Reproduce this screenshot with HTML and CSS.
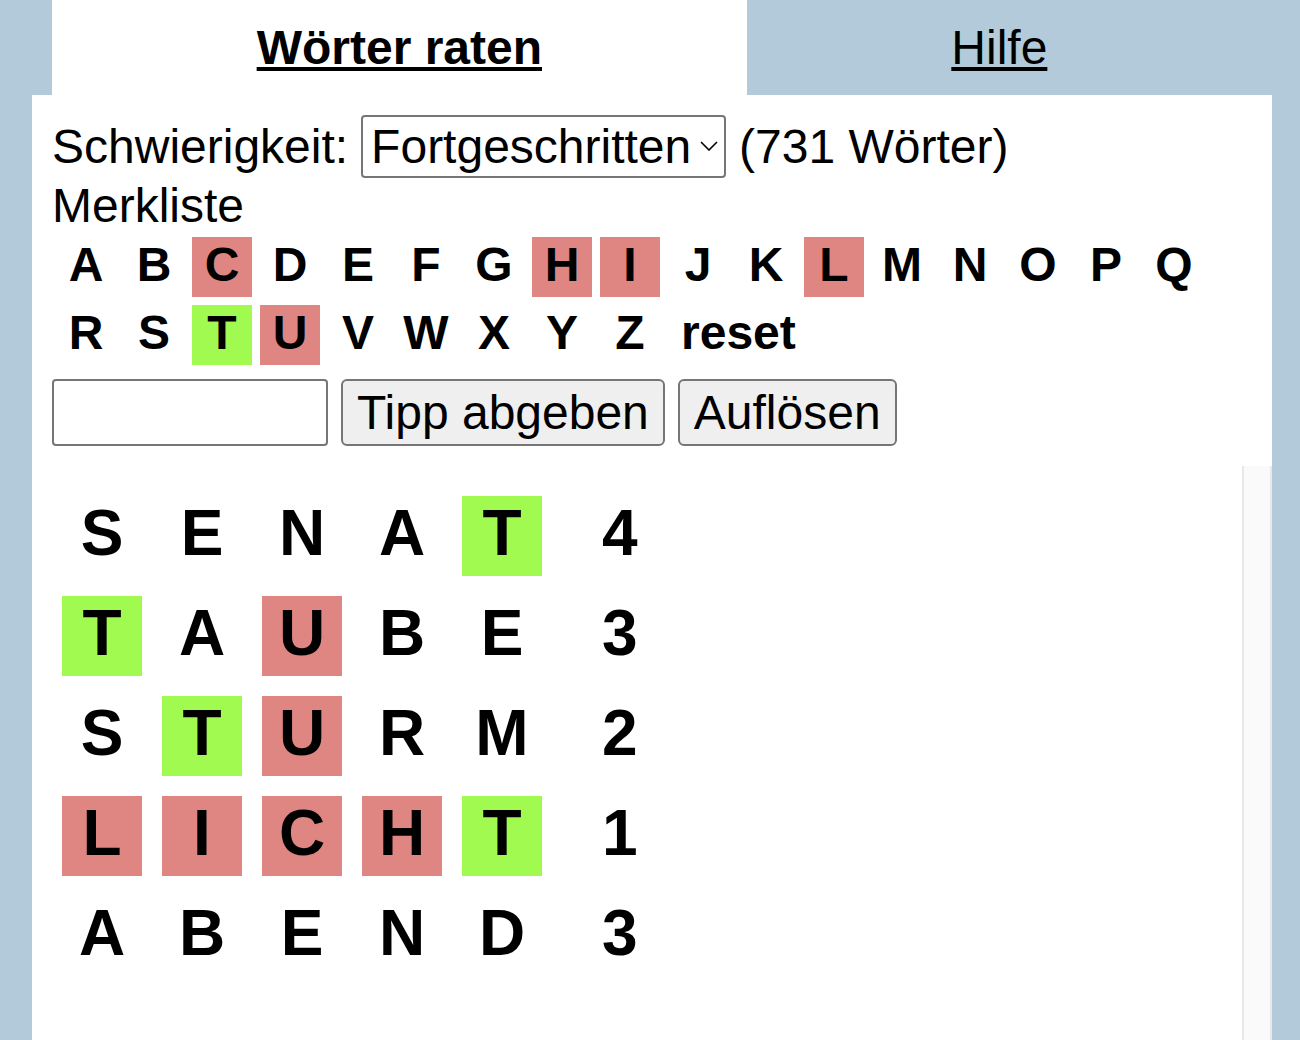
FILE: index.html
```html
<!DOCTYPE html>
<html lang="de">
<head>
<meta charset="utf-8">
<meta name="viewport" content="width=device-width, initial-scale=1">
<title>Wörter raten</title>
<link rel="stylesheet" href="styles.css">
</head>
<body>
<nav class="tabs">
  <a class="tab tab-active" href="#spiel">Wörter raten</a>
  <a class="tab" href="#hilfe">Hilfe</a>
</nav>
<main class="panel" id="spiel">
  <div class="controls">
    <div class="level">
      <label for="level">Schwierigkeit:</label>
      <span class="select-box">
        <select id="level"><option>Fortgeschritten</option></select>
        <svg class="chevron" viewBox="0 0 18 10" aria-hidden="true"><path d="M1 1l8 8 8-8" fill="none" stroke="#000" stroke-width="1.6"/></svg>
      </span>
      <span>(731 Wörter)</span>
    </div>
    <div>Merkliste</div>
    <div class="letters">
      <button class="key">A</button><button class="key">B</button><button class="key miss">C</button><button class="key">D</button><button class="key">E</button><button class="key">F</button><button class="key">G</button><button class="key miss">H</button><button class="key miss">I</button><button class="key">J</button><button class="key">K</button><button class="key miss">L</button><button class="key">M</button><button class="key">N</button><button class="key">O</button><button class="key">P</button><button class="key">Q</button><button class="key">R</button><button class="key">S</button><button class="key hit">T</button><button class="key miss">U</button><button class="key">V</button><button class="key">W</button><button class="key">X</button><button class="key">Y</button><button class="key">Z</button><button class="key key-reset">reset</button>
    </div>
    <form class="guess">
      <input class="guess-input" type="text" aria-label="Tipp" maxlength="5">
      <button class="btn" type="button">Tipp abgeben</button>
      <button class="btn" type="button">Auflösen</button>
    </form>
  </div>
  <div class="history">
    <div class="rows">
      <div class="row"><span class="tile">S</span><span class="tile">E</span><span class="tile">N</span><span class="tile">A</span><span class="tile hit">T</span><span class="score">4</span></div>
      <div class="row"><span class="tile hit">T</span><span class="tile">A</span><span class="tile miss">U</span><span class="tile">B</span><span class="tile">E</span><span class="score">3</span></div>
      <div class="row"><span class="tile">S</span><span class="tile hit">T</span><span class="tile miss">U</span><span class="tile">R</span><span class="tile">M</span><span class="score">2</span></div>
      <div class="row"><span class="tile miss">L</span><span class="tile miss">I</span><span class="tile miss">C</span><span class="tile miss">H</span><span class="tile hit">T</span><span class="score">1</span></div>
      <div class="row"><span class="tile">A</span><span class="tile">B</span><span class="tile">E</span><span class="tile">N</span><span class="tile">D</span><span class="score">3</span></div>
    </div>
    <div class="track"></div>
  </div>
</main>
</body>
</html>
```
FILE: styles.css
```css
* {
  box-sizing: border-box;
}

body {
  display: flex;
  flex-direction: column;
  min-height: 100vh;
  margin: 0;
  padding: 0 28px 0 32px;
  background: #b2cad9;
  color: #000;
  font: 48px/55px "Liberation Sans", Arial, sans-serif;
}

button,
input,
select {
  margin: 0;
  font: inherit;
  color: inherit;
}

.tabs {
  display: flex;
  padding: 0 20px;
}

.tab {
  flex: 1 1 auto;
  padding: 20px 0;
  text-align: center;
  color: inherit;
  text-decoration-thickness: 4px;
  text-underline-offset: 3px;
}

.tab-active {
  background: #fff;
  font-weight: bold;
}

.panel {
  display: flex;
  flex: 1;
  flex-direction: column;
  background: #fff;
}

.controls {
  padding: 20px;
}

.level {
  display: flex;
  flex-wrap: wrap;
  align-items: center;
  column-gap: 13px;
}

.select-box {
  position: relative;
  display: flex;
}

.select-box select {
  appearance: none;
  padding: 2px 32px 2px 8px;
  border: 2px solid #767676;
  border-radius: 4px;
  background: #fff;
}

.chevron {
  position: absolute;
  top: 26px;
  right: 8px;
  width: 18px;
  height: 10px;
  pointer-events: none;
}

.letters {
  display: flex;
  flex-wrap: wrap;
  gap: 8px;
  padding: 4px;
}

.key {
  width: 60px;
  height: 60px;
  padding: 0 0 5px;
  border: 0;
  background: none;
  font-weight: bold;
  text-align: center;
}

.key-reset {
  width: auto;
  padding: 0 13px 5px;
}

.hit {
  background: #a0fa4f;
}

.miss {
  background: #e08682;
}

.guess {
  display: flex;
  flex-wrap: wrap;
  gap: 13px;
  margin-top: 10px;
}

.guess-input {
  width: 276px;
  padding: 4px;
  border: 2px solid #767676;
  border-radius: 4px;
  background: #fff;
}

.btn {
  padding: 4px 14px;
  border: 2px solid #767676;
  border-radius: 6px;
  background: #efefef;
}

.history {
  display: flex;
  flex: 1;
}

.rows {
  display: flex;
  flex: 1;
  flex-direction: column;
  gap: 20px;
  padding: 30px;
  font-size: 64px;
  font-weight: bold;
  line-height: 74px;
}

.row {
  display: flex;
  gap: 20px;
}

.tile {
  width: 80px;
  height: 80px;
  text-align: center;
}

.score {
  padding-left: 40px;
}

.track {
  width: 30px;
  border: solid #e8e8e8;
  border-width: 0 2px;
  background: #fafafa;
}
```
